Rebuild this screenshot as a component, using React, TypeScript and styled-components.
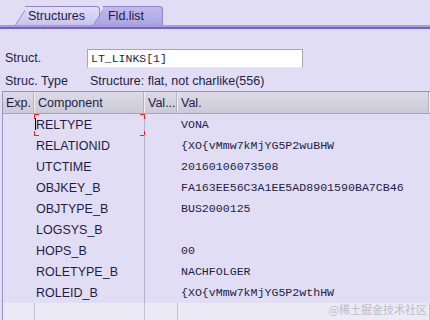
import styled, { createGlobalStyle } from 'styled-components';

const GlobalStyle = createGlobalStyle`
  html, body {
    margin: 0;
    padding: 0;
  }
  body {
    width: 430px;
    height: 320px;
    overflow: hidden;
    background: #e1ddf5;
    font-family: "Liberation Sans", Arial, sans-serif;
    font-size: 12px;
    color: #1e1e44;
  }
`;

interface Field {
  name: string;
  value: string;
}

const fields: Field[] = [
  { name: 'RELTYPE', value: 'VONA' },
  { name: 'RELATIONID', value: '{XO{vMmw7kMjYG5P2wuBHW' },
  { name: 'UTCTIME', value: '20160106073508' },
  { name: 'OBJKEY_B', value: 'FA163EE56C3A1EE5AD8901590BA7CB46' },
  { name: 'OBJTYPE_B', value: 'BUS2000125' },
  { name: 'LOGSYS_B', value: '' },
  { name: 'HOPS_B', value: '00' },
  { name: 'ROLETYPE_B', value: 'NACHFOLGER' },
  { name: 'ROLEID_B', value: '{XO{vMmw7kMjYG5P2wthHW' },
];

const App = (): JSX.Element => (
  <>
    <GlobalStyle />
    <Screen>
      <TabBar>
        <Tab>Structures</Tab>
        <Tab $active>Fld.list</Tab>
      </TabBar>
      <TabLine />

      <Form>
        <FieldRow>
          <Label>Struct.</Label>
          <Input>LT_LINKS[1]</Input>
        </FieldRow>
        <FieldRow>
          <Label>Struc. Type</Label>
          <Text>Structure: flat, not charlike(556)</Text>
        </FieldRow>
      </Form>

      <Table>
        <HeaderRow>
          <HeadCell>Exp.</HeadCell>
          <HeadCell>Component</HeadCell>
          <HeadCell>Val...</HeadCell>
          <HeadCell>Val.</HeadCell>
        </HeaderRow>
        {fields.map((f, i) => (
          <Row key={f.name}>
            <Cell />
            <NameCell>
              {i === 0 && <Caret />}
              {f.name}
              {i === 0 && (
                <>
                  <Corner $top $left />
                  <Corner $top />
                  <Corner $left />
                  <Corner />
                </>
              )}
            </NameCell>
            <Cell />
            <ValueCell>{f.value}</ValueCell>
          </Row>
        ))}
        <EmptyRow>
          <Cell />
          <Cell />
          <Cell />
          <Cell />
        </EmptyRow>
      </Table>

      <Watermark>@稀土掘金技术社区</Watermark>
    </Screen>
  </>
);

const Screen = styled.div`
  position: relative;
  width: 430px;
  height: 320px;
  overflow: hidden;
`;

const TabBar = styled.div`
  display: flex;
  align-items: flex-end;
  height: 25px;
  padding-left: 15px;
`;

const Tab = styled.div<{ $active?: boolean }>`
  position: relative;
  z-index: ${(p) => (p.$active ? 2 : 1)};
  display: flex;
  align-items: center;
  height: 18px;
  margin-left: ${(p) => (p.$active ? '-7px' : '0')};
  padding: ${(p) => (p.$active ? '1px 19px 0 15px' : '1px 15px 0 13px')};
  font-size: 12.5px;
  color: #1c1c48;

  &::before,
  &::after {
    content: '';
    position: absolute;
    top: 0;
    bottom: 0;
    z-index: -1;
    border-top: 1px solid #8c84cc;
    background: ${(p) =>
      p.$active
        ? 'linear-gradient(#c0baee, #aca4e2)'
        : 'linear-gradient(#e4e0f8, #c9c3ec)'};
  }

  &::before {
    left: 0;
    width: 20px;
    border-left: 1px solid #8c84cc;
    transform: skewX(-33deg);
    transform-origin: bottom left;
  }

  &::after {
    left: 10px;
    right: 0;
    border-right: 1px solid #8c84cc;
    border-top-right-radius: 4px;
  }
`;

const TabLine = styled.div`
  height: 4px;
  background: linear-gradient(#a59ddf 0 50%, #7264c2 50%);
`;

const Form = styled.div`
  display: flex;
  flex-direction: column;
  gap: 3px;
  padding-top: 19px;
`;

const FieldRow = styled.div`
  display: flex;
  align-items: center;
  height: 20px;
  font-size: 12.5px;
`;

const Label = styled.div`
  width: 82px;
  padding-left: 5px;
`;

const Input = styled.div`
  display: flex;
  align-items: center;
  box-sizing: border-box;
  width: 216px;
  height: 19px;
  padding-left: 3px;
  background: #fff;
  border: 1px solid #a8a8a8;
  border-bottom-color: #e8e8e8;
  font-family: "Liberation Mono", "Courier New", monospace;
  font-size: 11.5px;
`;

const Text = styled.div`
  padding-left: 3px;
`;

const Table = styled.div`
  margin-left: 2px;
  border-top: 1px solid #9890d0;
  border-left: 1px solid #9a94c4;
`;

const columns = '32px 110px 33px 1fr';

const HeaderRow = styled.div`
  display: grid;
  grid-template-columns: ${columns};
  height: 21px;
  background: linear-gradient(#dcdae6, #cdcad8);
  border-bottom: 1px solid #a8a4bc;
`;

const HeadCell = styled.div`
  display: flex;
  align-items: center;
  padding-left: 3px;
  border-right: 1px solid #f0eff6;
  box-shadow: inset -1px 0 0 #b4b0c4;
  font-size: 12.5px;
  color: #1c1c48;
`;

const Row = styled.div`
  display: grid;
  grid-template-columns: ${columns};
  height: 21px;
`;

const Cell = styled.div`
  position: relative;
`;

const NameCell = styled.div`
  position: relative;
  display: flex;
  align-items: center;
  padding-left: 1px;
  border-right: 1px solid #b6b1d2;
  font-size: 12.5px;
`;

const Caret = styled.span`
  position: absolute;
  left: 0;
  top: 4px;
  width: 1px;
  height: 12px;
  background: #000;
`;

const Corner = styled.span<{ $top?: boolean; $left?: boolean }>`
  position: absolute;
  width: 4px;
  height: 4px;
  ${(p) => (p.$top ? 'top: 0;' : 'bottom: -1px;')}
  ${(p) => (p.$left ? 'left: -1px;' : 'right: -1px;')}
  border-color: #e8281c;
  border-style: solid;
  border-width: ${(p) =>
    `${p.$top ? 1 : 0}px ${p.$left ? 0 : 1}px ${p.$top ? 0 : 1}px ${p.$left ? 1 : 0}px`};
`;

const ValueCell = styled.div`
  display: flex;
  align-items: center;
  padding-left: 3px;
  font-family: "Liberation Mono", "Courier New", monospace;
  font-size: 11.6px;
  white-space: nowrap;
`;

const EmptyRow = styled.div`
  display: grid;
  grid-template-columns: ${columns};
  height: 21px;
  background: #ebeaf6;

  & > div {
    border-right: 1px solid #c4c0da;
  }
`;

const Watermark = styled.div`
  position: absolute;
  right: 3px;
  bottom: 3px;
  color: #bdbcc8;
  font-family: "Noto Sans CJK SC", sans-serif;
  font-size: 11px;
`;

export default App;
